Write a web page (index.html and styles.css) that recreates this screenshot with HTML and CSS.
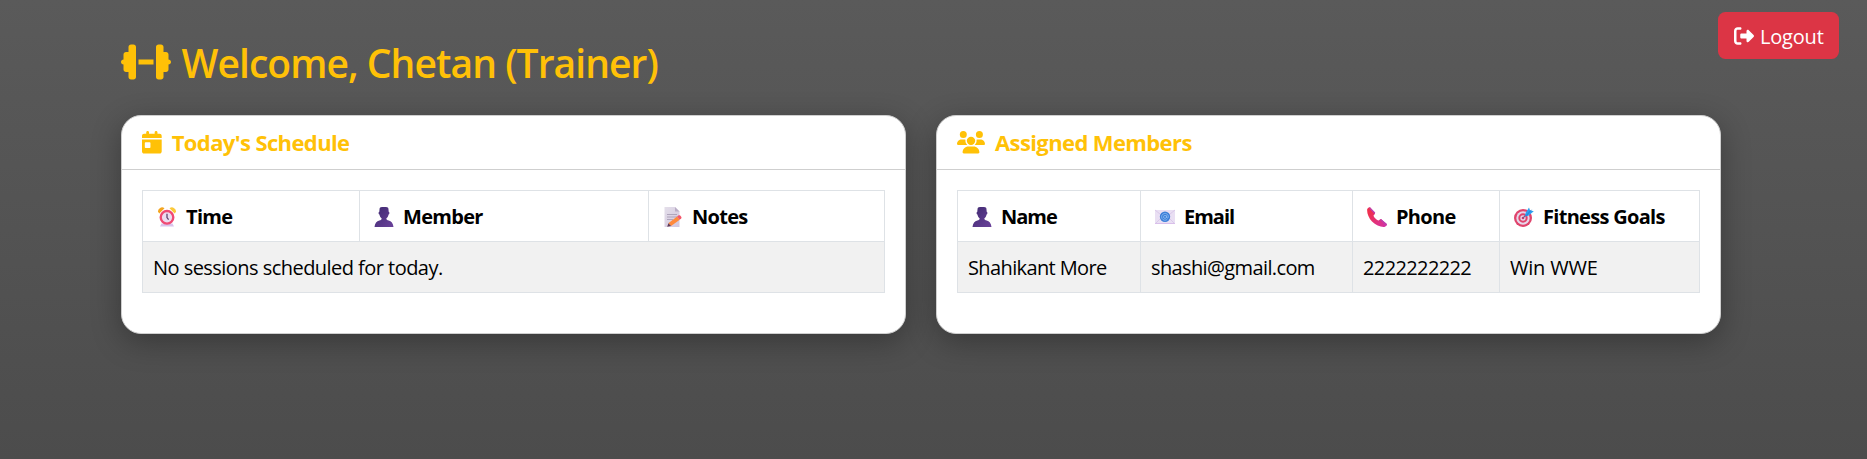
FILE: index.html
```html
<!DOCTYPE html>
<html lang="en">
<head>
<meta charset="utf-8">
<title>Trainer Dashboard</title>
<link rel="stylesheet" href="styles.css">
</head>
<body>
<svg class="defs" width="0" height="0">
  <defs>
    <linearGradient id="purple" x1="0" y1="0" x2="1" y2="1"><stop offset="0" stop-color="#3f2a70"/><stop offset="1" stop-color="#6b429b"/></linearGradient>
    <linearGradient id="call" x1="0" y1="0" x2="1" y2="1"><stop offset="0.2" stop-color="#f0304f"/><stop offset="1" stop-color="#d233a8"/></linearGradient>
    <linearGradient id="paper" x1="0" y1="0" x2="1" y2="1"><stop offset="0" stop-color="#e4dfea"/><stop offset="1" stop-color="#d2c6de"/></linearGradient>
    <symbol id="person" viewBox="0 0 20 20"><path fill="url(#purple)" d="M5.6 1.6C5.8.5 7 .1 10 .1s4.200.4 4.400 1.500l.3 3.200c1 .1 1 2.400-.1 2.700-.4 2-1.300 3.300-2.300 4 .1 1.300.8 1.600 2.400 2.100 2.600.8 4.400 2.700 4.800 6.300H.5c.4-3.600 2.200-5.500 4.800-6.300 1.600-.5 2.300-.8 2.400-2.100-1-.7-1.900-2-2.300-4-1.100-.3-1.100-2.600-.1-2.700z"/></symbol>
  </defs>
</svg>
<a class="logout"><svg viewBox="0 0 512 512"><path d="M377.900 105.900L500.700 228.700c7.200 7.200 11.300 17.100 11.300 27.300s-4.100 20.100-11.300 27.300L377.900 406.100c-6.400 6.400-15 9.900-24 9.900c-18.700 0-33.900-15.200-33.900-33.900l0-62.100-128 0c-17.700 0-32-14.300-32-32l0-64c0-17.700 14.300-32 32-32l128 0 0-62.100c0-18.700 15.200-33.900 33.900-33.900c9 0 17.600 3.600 24 9.900zM160 96L96 96c-17.700 0-32 14.300-32 32l0 256c0 17.700 14.300 32 32 32l64 0c17.700 0 32 14.300 32 32s-14.300 32-32 32l-64 0c-53 0-96-43-96-96L0 128C0 75 43 32 96 32l64 0c17.700 0 32 14.300 32 32s-14.300 32-32 32z"/></svg><span>Logout</span></a>
<main class="container">
  <h2 class="title"><svg viewBox="0 0 640 512"><path d="M96 64c0-17.700 14.300-32 32-32l32 0c17.700 0 32 14.300 32 32l0 160 0 64 0 160c0 17.700-14.300 32-32 32l-32 0c-17.700 0-32-14.300-32-32l0-64-32 0c-17.700 0-32-14.300-32-32l0-64c-17.700 0-32-14.300-32-32s14.300-32 32-32l0-64c0-17.700 14.300-32 32-32l32 0 0-64zm448 0l0 64 32 0c17.700 0 32 14.300 32 32l0 64c17.700 0 32 14.300 32 32s-14.300 32-32 32l0 64c0 17.700-14.300 32-32 32l-32 0 0 64c0 17.700-14.300 32-32 32l-32 0c-17.700 0-32-14.300-32-32l0-160 0-64 0-160c0-17.700 14.300-32 32-32l32 0c17.700 0 32 14.300 32 32zM416 224l0 64-192 0 0-64 192 0z"/></svg><span>Welcome, Chetan (Trainer)</span></h2>
  <div class="row">
    <section class="card">
      <div class="card-header"><svg class="i-cal" viewBox="0 0 448 512"><path d="M128 0c17.700 0 32 14.300 32 32l0 32 128 0 0-32c0-17.700 14.300-32 32-32s32 14.300 32 32l0 32 48 0c26.500 0 48 21.500 48 48l0 48L0 160l0-48C0 85.500 21.500 64 48 64l48 0 0-32c0-17.700 14.300-32 32-32zM0 192l448 0 0 272c0 26.500-21.500 48-48 48L48 512c-26.500 0-48-21.500-48-48L0 192zm80 64c-8.800 0-16 7.200-16 16l0 96c0 8.800 7.200 16 16 16l96 0c8.800 0 16-7.200 16-16l0-96c0-8.800-7.200-16-16-16l-96 0z"/></svg><span>Today's Schedule</span></div>
      <div class="card-body">
        <table class="table schedule">
          <colgroup><col class="s1"><col class="s2"><col class="s3"></colgroup>
          <thead><tr>
            <th><svg viewBox="0 0 20 20"><path fill="#f4a51f" d="M1 4.800A4 4 0 0 1 7.500 1.300L2.300 6.500z"/><path fill="#fbc93a" d="M19 4.800A4 4 0 0 0 12.500 1.300l5.200 5.200z"/><path fill="#d9c3ec" d="M3 19.500l1.500-3h11l1.500 3z"/><circle cx="10" cy="10.300" r="6.300" fill="#ecdcf0" stroke="#f04a74" stroke-width="2.400"/><path d="M10 6.800v3.800l1.600 2" fill="none" stroke="#61426f" stroke-width="1.300"/></svg><span>Time</span></th>
            <th><svg><use href="#person"/></svg><span>Member</span></th>
            <th><svg viewBox="0 0 20 20"><path fill="url(#paper)" d="M1.500 0H12l4.500 4.500V20h-15z"/><path fill="#b9adc6" d="M12 0l4.500 4.500H12z"/><path d="M4 7.500h10M4 10h10M4 12.500h6" stroke="#a99fb5" stroke-width=".9"/><path fill="#ff8a3c" d="M5.400 16.200l8.700-6.700 2.600 3.200-8.600 6.200z"/><path fill="#f4556a" d="M14.100 9.500l1.600-1.200c1.200-.8 3.500 1.600 2.600 3l-1.600 1.400z"/><path fill="#603a55" d="M5.400 16.200l2.700 2.700-3.900.9z"/></svg><span>Notes</span></th>
          </tr></thead>
          <tbody><tr><td colspan="3"><span class="wide">No sessions scheduled for today.</span></td></tr></tbody>
        </table>
      </div>
    </section>
    <section class="card">
      <div class="card-header"><svg class="i-users" viewBox="0 0 640 512"><path d="M144 0a80 80 0 1 1 0 160A80 80 0 1 1 144 0zM512 0a80 80 0 1 1 0 160A80 80 0 1 1 512 0zM0 298.700C0 239.800 47.800 192 106.700 192l42.700 0c15.900 0 31 3.500 44.600 9.700c-1.300 7.200-1.900 14.700-1.900 22.300c0 38.200 16.800 72.500 43.300 96c-.2 0-.4 0-.7 0L21.300 320C9.600 320 0 310.400 0 298.700zM405.300 320c-.2 0-.4 0-.7 0c26.600-23.500 43.300-57.800 43.300-96c0-7.600-.7-15-1.900-22.300c13.600-6.300 28.700-9.700 44.600-9.700l42.700 0C592.200 192 640 239.800 640 298.700c0 11.800-9.600 21.300-21.300 21.300l-213.300 0zM224 224a96 96 0 1 1 192 0 96 96 0 1 1 -192 0zM128 485.300C128 411.700 187.700 352 261.300 352l117.300 0C452.300 352 512 411.700 512 485.300c0 14.700-11.900 26.700-26.700 26.700l-330.700 0c-14.700 0-26.700-11.900-26.700-26.700z"/></svg><span>Assigned Members</span></div>
      <div class="card-body">
        <table class="table members">
          <colgroup><col class="m1"><col class="m2"><col class="m3"><col class="m4"></colgroup>
          <thead><tr>
            <th><svg><use href="#person"/></svg><span class="tight">Name</span></th>
            <th><svg viewBox="0 0 20 20"><path fill="#e9dff3" d="M0 3h20v14H0z"/><path d="M0 3l10 8 10-8M0 17l7-7M20 17l-7-7" fill="none" stroke="#d5c3e6" stroke-width=".8"/><path fill="#d9bfea" d="M0 16h20v1H0z"/><circle cx="10" cy="9.800" r="5.200" fill="#3c7fd8"/><path d="M12.200 12.400a3.400 3.400 0 1 1 1.200-2.600c0 1.700-1.700 1.700-1.700.3V8.300" fill="none" stroke="#a8cdf8" stroke-width=".6"/><circle cx="10" cy="9.900" r="1.500" fill="none" stroke="#a8cdf8" stroke-width=".6"/></svg><span class="tight">Email</span></th>
            <th><svg viewBox="0 0 20 20"><path fill="url(#call)" d="M.2 2C.7 1 2 0 3 .2L8 6.200c0 1-1.500 2-1.500 2.500.6 1.800 3 4.200 4.800 4.900.7.200 1.700-1.500 2.700-1.500l5.800 5.200c.3 1-1 2.300-2.400 2.600-3.500.4-8.800-1.700-12.400-5.400C1.600 11-.3 6 .2 2z"/><path fill="#bd3fae" d="M3 .2L8 5.300c.4.500.1 1.200-.5 1.600L2 1zM14 12.100l5.700 4.700c.4.700 0 1.400-.5 1.700l-6.100-5.600z"/></svg><span>Phone</span></th>
            <th><svg viewBox="0 0 20 20"><circle cx="9" cy="11" r="9" fill="#e0446c"/><circle cx="9" cy="11" r="6.700" fill="#e6d7ea"/><circle cx="9" cy="11" r="4.700" fill="#e0446c"/><circle cx="9" cy="11" r="2.700" fill="#e6d7ea"/><circle cx="9" cy="11" r="1.300" fill="#d93665"/><path d="M8.800 11.200L15 5" stroke="#6a5a94" stroke-width="1.200"/><path fill="#2f9ff0" d="M11.500 6l3.500-5.500 1 2.800 3.800 1L14 9l-2.800.2z"/><path d="M12 8.800l5.500-6" stroke="#1b78cf" stroke-width=".8"/></svg><span>Fitness Goals</span></th>
          </tr></thead>
          <tbody><tr><td><span>Shahikant More</span></td><td><span>shashi@gmail.com</span></td><td><span>2222222222</span></td><td><span class="caps">Win WWE</span></td></tr></tbody>
        </table>
      </div>
    </section>
  </div>
</main>
</body>
</html>
```
FILE: styles.css
```css
* { box-sizing: border-box; }
body {
  margin: 0;
  height: 459px;
  overflow: hidden;
  background: linear-gradient(#5a5a5a, #4c4c4c);
  font: 20px/30px "Open Sans", "Noto Sans", sans-serif;
  color: #000;
}
.defs { position: absolute; }
svg { flex: none; fill: currentColor; }
.logout {
  position: absolute;
  top: 12px;
  right: 28px;
  width: 121px;
  height: 47px;
  padding-left: 16px;
  display: flex;
  align-items: center;
  gap: 6px;
  border-radius: 7.5px;
  background: #dc3545;
  color: #fff;
  letter-spacing: -.2px;
}
.logout svg { width: 20px; height: 20px; }
.logout span { padding-top: 2px; }
.container { width: 1600px; margin: 0 0 0 121px; padding-top: 38px; }
.title {
  margin: 0 0 29px;
  height: 48px;
  display: flex;
  align-items: center;
  gap: 10.5px;
  color: #ffc107;
  font-size: 39px;
  font-weight: 600;
  line-height: 48px;
  letter-spacing: -.94px;
}
.title svg { width: 50px; height: 40px; }
.title span { padding-top: 2px; }
.row { display: flex; gap: 30px; }
.card {
  width: 785px;
  height: 219px;
  border: 1px solid #cfcfcf;
  border-radius: 20px;
  background: #fff;
  box-shadow: 0 8px 30px rgba(0, 0, 0, .3);
}
.card-header {
  height: 54px;
  padding: 0 20px;
  display: flex;
  align-items: center;
  border-bottom: 1px solid #cfcfcf;
  color: #ffc107;
  font-size: 22px;
  font-weight: 700;
  letter-spacing: -.61px;
}
.card-header span { padding-bottom: 2px; }
.i-cal { width: 19.7px; height: 22.5px; margin-right: 10px; }
.i-users { width: 28px; height: 22.5px; margin-right: 10px; }
.card-body { padding: 20px; }
.table { width: 743px; border-collapse: collapse; table-layout: fixed; }
.table th, .table td {
  height: 51px;
  padding: 2px 10px 0;
  border: 1px solid #dee2e6;
  text-align: left;
  white-space: nowrap;
  letter-spacing: -.62px;
}
.table td { background: #f1f1f1; }
.table th { letter-spacing: -.7px; }
.table th svg { width: 20px; height: 20px; margin: 0 9px 0 4px; vertical-align: -3px; }
.wide { letter-spacing: -.54px; }
.tight { letter-spacing: -1px; }
.caps { letter-spacing: -.2px; }
.s1 { width: 217px; } .s2 { width: 289px; } .s3 { width: 236px; }
.m1 { width: 183px; } .m2 { width: 212px; } .m3 { width: 147px; } .m4 { width: 200px; }
.members { width: 743px; }
```
